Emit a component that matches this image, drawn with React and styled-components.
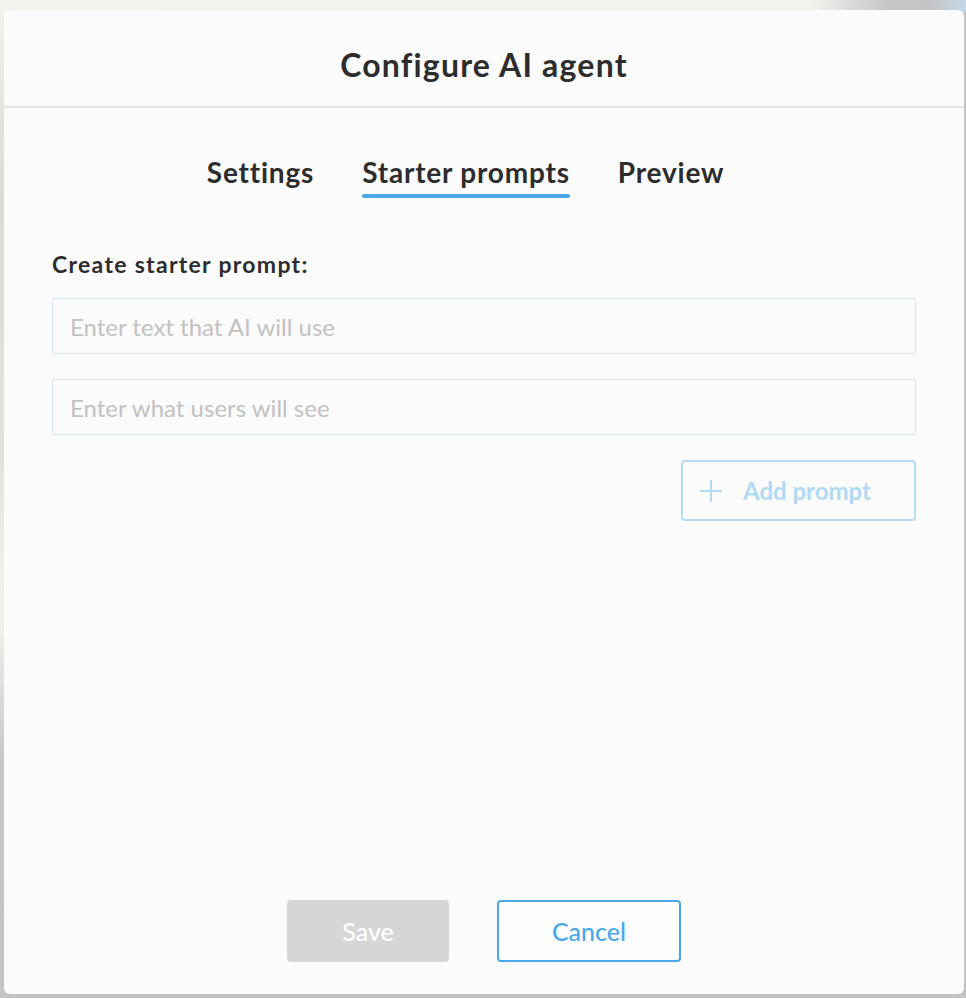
import React, { useState } from "react";
import styled, { createGlobalStyle } from "styled-components";

const GlobalStyle = createGlobalStyle`
    html, body {
        margin: 0;
        padding: 0;
        height: 100%;
    }

    body {
        font-family: Lato, "Open Sans", "Liberation Sans", sans-serif;
        background-color: #c4c4c4;
        background-image:
            linear-gradient(to right, #f4f3ef 0%, #f3f2ee 84%, #c6c6c6 92%, #c4c4c4 96%, #c6d8e6 100%),
            linear-gradient(to bottom, #f2f1ec 0%, #dcdad4 20%, #e4e2dc 45%, #f3f2ec 62%, #c8c8c8 76%, #c4c4c4 100%);
        background-size: 100% 12px, 6px 100%;
        background-repeat: no-repeat;
        background-position: 0 0, 0 0;
    }
`;

const Page = styled.div`
    width: 966px;
    height: 998px;
    box-sizing: border-box;
    padding: 10px 2px 4px 4px;
    display: flex;
`;

const Dialog = styled.div`
    flex: 1;
    display: flex;
    flex-direction: column;
    background: #fbfbfb;
    border-radius: 6px;
    overflow: hidden;
`;

const Header = styled.header`
    height: 96px;
    display: flex;
    align-items: center;
    justify-content: center;
    border-bottom: 2px solid #e3e3e3;

    h1 {
        margin: 0;
        padding-top: 12px;
        font-size: 32px;
        font-weight: 700;
        color: #2d2d2d;
        letter-spacing: 1.2px;
    }
`;

const Body = styled.div`
    flex: 1;
    display: flex;
    flex-direction: column;
    padding: 0 48px;
`;

const TabBar = styled.nav`
    display: flex;
    justify-content: center;
    gap: 48px;
    padding: 47px 37px 0 0;
    margin-bottom: 51px;
`;

const Tab = styled.button`
    position: relative;
    border: 0;
    background: none;
    padding: 0 0 10px;
    font-family: inherit;
    font-size: 28px;
    font-weight: 700;
    color: #2d2d2d;
    letter-spacing: 0.8px;
    cursor: pointer;

    &::after {
        content: "";
        position: absolute;
        left: 0;
        right: 0;
        bottom: 1px;
        height: 4px;
        border-radius: 2px;
        background: ${(p) => (p.$active ? "#4aa8e8" : "transparent")};
    }
`;

const Label = styled.label`
    font-size: 23px;
    font-weight: 700;
    color: #2d2d2d;
    letter-spacing: 1.3px;
    margin-bottom: 20px;
`;

const Input = styled.input`
    height: 56px;
    box-sizing: border-box;
    border: 1.5px solid #d4e5f5;
    border-radius: 2px;
    background: #fbfbfb;
    padding: 0 17px;
    font-family: inherit;
    font-size: 24px;
    color: #2d2d2d;
    margin-bottom: 25px;
    outline: none;

    &::placeholder {
        color: #c2c2c2;
    }
`;

const AddRow = styled.div`
    display: flex;
    justify-content: flex-end;
`;

const AddButton = styled.button`
    width: 235px;
    height: 61px;
    box-sizing: border-box;
    display: flex;
    align-items: center;
    gap: 21px;
    padding: 0 0 0 17px;
    border: 2px solid #b7dcf4;
    border-radius: 4px;
    background: #fbfbfb;
    font-family: inherit;
    font-size: 24px;
    font-weight: 700;
    color: #b3daf3;
    cursor: default;
`;

const Footer = styled.footer`
    display: flex;
    justify-content: center;
    gap: 48px;
    padding-bottom: 32px;
    margin-top: auto;
`;

const FooterButton = styled.button`
    height: 62px;
    width: ${(p) => p.$width}px;
    box-sizing: border-box;
    border-radius: 4px;
    font-family: inherit;
    font-size: 25px;
    font-weight: 500;
    cursor: pointer;
    border: 2px solid ${(p) => (p.$primary ? "#d6d6d6" : "#4aa8e8")};
    background: ${(p) => (p.$primary ? "#d6d6d6" : "#fdfdfd")};
    color: ${(p) => (p.$primary ? "#ffffff" : "#4aa8e8")};
`;

const PlusIcon = () => (
    <svg width="22" height="22" viewBox="0 0 22 22" fill="none">
        <path d="M11 0v22M0 11h22" stroke="#b3daf3" strokeWidth="2" />
    </svg>
);

const tabs = ["Settings", "Starter prompts", "Preview"];

function App() {
    const [activeTab, setActiveTab] = useState("Starter prompts");

    return (
        <>
            <GlobalStyle />
            <Page>
                <Dialog>
                    <Header>
                        <h1>Configure AI agent</h1>
                    </Header>
                    <Body>
                        <TabBar>
                            {tabs.map((t) => (
                                <Tab key={t} $active={t === activeTab} onClick={() => setActiveTab(t)}>
                                    {t}
                                </Tab>
                            ))}
                        </TabBar>

                        <Label>Create starter prompt:</Label>
                        <Input placeholder="Enter text that AI will use" />
                        <Input placeholder="Enter what users will see" />

                        <AddRow>
                            <AddButton disabled>
                                <PlusIcon />
                                Add prompt
                            </AddButton>
                        </AddRow>

                        <Footer>
                            <FooterButton $primary $width={162} disabled>
                                Save
                            </FooterButton>
                            <FooterButton $width={184}>Cancel</FooterButton>
                        </Footer>
                    </Body>
                </Dialog>
            </Page>
        </>
    );
}

export default App;
